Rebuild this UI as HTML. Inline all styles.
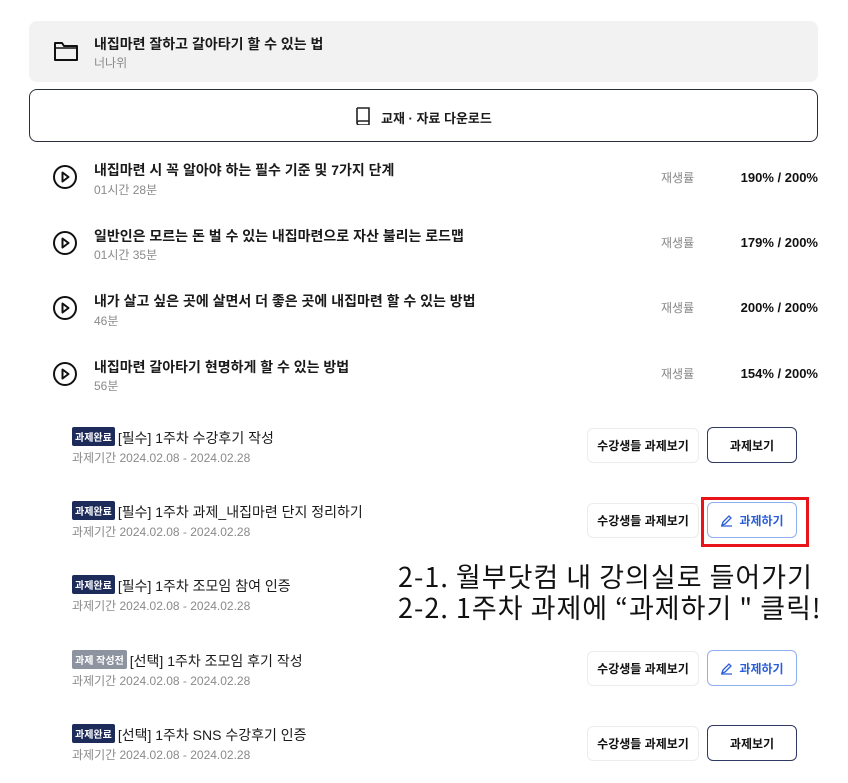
<!DOCTYPE html>
<html><head><meta charset="utf-8"><style>
*{margin:0;padding:0;box-sizing:border-box}
body{width:848px;height:783px;background:#fff;position:relative;overflow:hidden;font-family:"Liberation Sans","Noto Sans CJK KR",sans-serif;color:#111}
.a{position:absolute;white-space:nowrap}
.t{font-size:14px;font-weight:600;color:#1a1a1a}
.s{font-size:12px;color:#8a8a8a}
.badge{display:inline-block;background:#1c2b5a;color:#fff;font-size:10px;font-weight:700;padding:2px 3px;border-radius:2px;vertical-align:2px;margin-right:3px}
.badge.g{background:#8e93a0}
.at{font-size:14px;color:#1a1a1a}
.btn1{position:absolute;width:112px;height:35px;border:1px solid #ececec;border-radius:6px;font-size:12px;font-weight:700;display:flex;align-items:center;justify-content:center;left:587px}
.btn2{position:absolute;width:90px;height:36px;border:1px solid #2e3a63;border-radius:6px;font-size:12px;font-weight:700;display:flex;align-items:center;justify-content:center;left:707px}
.btn3{position:absolute;width:90px;height:36px;border:1px solid #8fb0f0;border-radius:6px;font-size:12px;font-weight:600;color:#2a5ed8;display:flex;align-items:center;justify-content:center;left:707px;gap:6px}
</style></head><body>
<div class="a" style="left:29px;top:21px;width:789px;height:61px;background:#f2f2f2;border-radius:8px"></div>
<svg class="a" style="left:53px;top:40px" width="26" height="23" viewBox="0 0 26 23"><path d="M2 3h7l2 3h13v14H2z" fill="none" stroke="#111" stroke-width="2" stroke-linejoin="round"/><path d="M2 8h22" stroke="#111" stroke-width="1.5"/></svg>
<div class="a t" style="left:94px;top:34px">내집마련 잘하고 갈아타기 할 수 있는 법</div>
<div class="a s" style="left:94px;top:54px">너나위</div>
<div class="a" style="left:29px;top:89px;width:789px;height:53px;border:1px solid #2b2f3a;border-radius:8px"></div>
<svg class="a" style="left:355px;top:106px" width="16" height="19" viewBox="0 0 16 19"><path d="M2 2h12v13H4a2 2 0 0 0 0 4h10v-4M2 2v15" fill="none" stroke="#222" stroke-width="1.6"/></svg>
<div class="a t" style="left:381px;top:108px;font-size:13px">교재 · 자료 다운로드</div>

<div class="a t" style="left:94px;top:160px">내집마련 시 꼭 알아야 하는 필수 기준 및 7가지 단계</div>
<div class="a s" style="left:94px;top:181px">01시간 28분</div>
<div class="a t" style="left:94px;top:226px">일반인은 모르는 돈 벌 수 있는 내집마련으로 자산 불리는 로드맵</div>
<div class="a s" style="left:94px;top:246px">01시간 35분</div>
<div class="a t" style="left:94px;top:291px">내가 살고 싶은 곳에 살면서 더 좋은 곳에 내집마련 할 수 있는 방법</div>
<div class="a s" style="left:94px;top:312px">46분</div>
<div class="a t" style="left:94px;top:357px">내집마련 갈아타기 현명하게 할 수 있는 방법</div>
<div class="a s" style="left:94px;top:377px">56분</div>

<svg class="a" style="left:52px;top:164px" width="26" height="230" viewBox="0 0 26 230">
<g fill="none" stroke="#111" stroke-width="2"><circle cx="13" cy="13" r="11"/><path d="M10.5 8.5l6 4.5-6 4.5z" stroke-linejoin="round"/></g>
<g fill="none" stroke="#111" stroke-width="2" transform="translate(0,66)"><circle cx="13" cy="13" r="11"/><path d="M10.5 8.5l6 4.5-6 4.5z" stroke-linejoin="round"/></g>
<g fill="none" stroke="#111" stroke-width="2" transform="translate(0,131)"><circle cx="13" cy="13" r="11"/><path d="M10.5 8.5l6 4.5-6 4.5z" stroke-linejoin="round"/></g>
<g fill="none" stroke="#111" stroke-width="2" transform="translate(0,197)"><circle cx="13" cy="13" r="11"/><path d="M10.5 8.5l6 4.5-6 4.5z" stroke-linejoin="round"/></g>
</svg>
<div class="a" style="left:661px;top:169px;font-size:12px;color:#888">재생률</div>
<div class="a" style="left:661px;top:234px;font-size:12px;color:#888">재생률</div>
<div class="a" style="left:661px;top:299px;font-size:12px;color:#888">재생률</div>
<div class="a" style="left:661px;top:365px;font-size:12px;color:#888">재생률</div>
<div class="a" style="right:30px;top:170px;font-size:13px;font-weight:600">190% / 200%</div>
<div class="a" style="right:30px;top:235px;font-size:13px;font-weight:600">179% / 200%</div>
<div class="a" style="right:30px;top:300px;font-size:13px;font-weight:600">200% / 200%</div>
<div class="a" style="right:30px;top:366px;font-size:13px;font-weight:600">154% / 200%</div>

<div class="a at" style="left:72px;top:427px"><span class="badge">과제완료</span>[필수] 1주차 수강후기 작성</div>
<div class="a s" style="left:72px;top:449px">과제기간 2024.02.08 - 2024.02.28</div>
<div class="btn1" style="top:428px">수강생들 과제보기</div><div class="btn2" style="top:427px">과제보기</div>

<div class="a at" style="left:72px;top:501px"><span class="badge">과제완료</span>[필수] 1주차 과제_내집마련 단지 정리하기</div>
<div class="a s" style="left:72px;top:523px">과제기간 2024.02.08 - 2024.02.28</div>
<div class="btn1" style="top:503px">수강생들 과제보기</div>
<div class="btn3" style="top:502px"><svg width="13" height="13" viewBox="0 0 13 13"><path d="M2 11l1-3 6-6 2 2-6 6zM1 12h11" fill="none" stroke="#2a5ed8" stroke-width="1.3"/></svg>과제하기</div>
<div class="a" style="left:701px;top:497px;width:108px;height:50px;border:3px solid #e8141a"></div>

<div class="a at" style="left:72px;top:575px"><span class="badge">과제완료</span>[필수] 1주차 조모임 참여 인증</div>
<div class="a s" style="left:72px;top:597px">과제기간 2024.02.08 - 2024.02.28</div>
<div class="a" style="left:398px;top:560px;font-size:27px;line-height:31px;color:#111;font-family:'Noto Sans CJK KR','Liberation Sans',sans-serif;letter-spacing:1px">2-1. 월부닷컴 내 강의실로 들어가기<br>2-2. 1주차 과제에 “과제하기 " 클릭!</div>

<div class="a at" style="left:72px;top:650px"><span class="badge g">과제 작성전</span>[선택] 1주차 조모임 후기 작성</div>
<div class="a s" style="left:72px;top:672px">과제기간 2024.02.08 - 2024.02.28</div>
<div class="btn1" style="top:651px">수강생들 과제보기</div>
<div class="btn3" style="top:650px"><svg width="13" height="13" viewBox="0 0 13 13"><path d="M2 11l1-3 6-6 2 2-6 6zM1 12h11" fill="none" stroke="#2a5ed8" stroke-width="1.3"/></svg>과제하기</div>

<div class="a at" style="left:72px;top:724px"><span class="badge">과제완료</span>[선택] 1주차 SNS 수강후기 인증</div>
<div class="a s" style="left:72px;top:746px">과제기간 2024.02.08 - 2024.02.28</div>
<div class="btn1" style="top:726px">수강생들 과제보기</div><div class="btn2" style="top:725px">과제보기</div>
</body></html>
